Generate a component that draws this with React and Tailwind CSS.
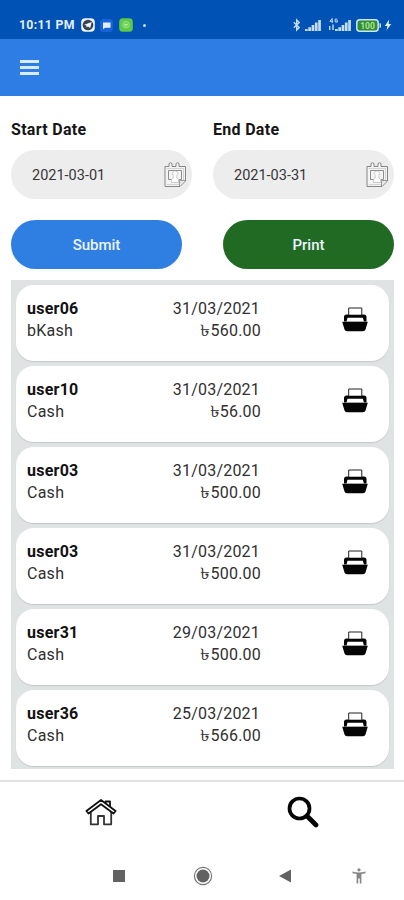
import React from "react";

const payments = [
  { user: "user06", method: "bKash", date: "31/03/2021", amount: "560.00" },
  { user: "user10", method: "Cash", date: "31/03/2021", amount: "56.00" },
  { user: "user03", method: "Cash", date: "31/03/2021", amount: "500.00" },
  { user: "user03", method: "Cash", date: "31/03/2021", amount: "500.00" },
  { user: "user31", method: "Cash", date: "29/03/2021", amount: "500.00" },
  { user: "user36", method: "Cash", date: "25/03/2021", amount: "566.00" },
];

function SignalBars() {
  return (
    <svg width="16" height="12" viewBox="0 0 16 12" fill="#c5dcf5">
      <path d="M0 12V10H2.7V12ZM3.3 12V8.2H6V12ZM6.6 12V6H9.3V12ZM9.9 12V3.4H12.6V12ZM13.2 12V1H15.9V12Z" />
    </svg>
  );
}

function StatusBar() {
  return (
    <div className="flex h-[39px] items-center bg-[#0052b4] pt-[11px] pl-[19px] pr-[12px]">
      <span className="w-[62px] whitespace-nowrap text-[12.3px] leading-4 font-bold tracking-[0.3px] text-[#e4effb]">10:11 PM</span>
      <svg width="14" height="14" viewBox="0 0 14 14">
        <rect x="0.2" y="0.2" width="13.6" height="13.6" rx="4" fill="#edf2f7" />
        <circle cx="7" cy="7" r="5.3" fill="#39424d" />
        <path d="M3.2 6.7 10.7 4 9.2 10 6.9 8.4 5.6 9.5 5.4 7.5Z" fill="#f4f7fa" />
      </svg>
      <svg className="ml-[5px]" width="13" height="13" viewBox="0 0 13 13">
        <rect width="13" height="13" rx="3.5" fill="#1863dc" />
        <path d="M3 3.5H10.5V8.8H5.2L3 10.2Z" fill="#e4efff" />
      </svg>
      <svg className="ml-[6px]" width="14" height="14" viewBox="0 0 14 14">
        <rect x="0.2" y="0.2" width="13.6" height="13.6" rx="3.5" fill="#5dc84a" />
        <circle cx="7" cy="6.7" r="3.4" fill="#72d65d" stroke="#93e27f" strokeWidth="0.8" />
        <path d="M5 6.5H9M6 8H8" stroke="#b9f0aa" strokeWidth="0.8" />
      </svg>
      <span className="ml-[10px] size-[3px] rounded-full bg-[#bfd9f6]" />
      <svg className="ml-auto" width="10" height="14" viewBox="0 0 10 14" fill="none" stroke="#c5dcf5" strokeWidth="1.4">
        <path d="M1.8 4.2 7.2 9.4 4.7 12V2L7.2 4.6 1.8 9.8" />
      </svg>
      <span className="ml-[3px]"><SignalBars /></span>
      <span className="relative ml-[14px]">
        <SignalBars />
        <svg className="absolute top-[-1px] left-[-7px]" width="12" height="13" viewBox="0 0 12 13" fill="none" stroke="#c5dcf5">
          <path d="M4.2 0.5 1.9 3.3H5M4.2 0.5V5M9.4 1.2H7.2V4H9.4V2.7H8.4" />
          <path d="M1.7 12V8M5 12V6.5" strokeWidth="1.4" />
        </svg>
      </span>
      <svg className="ml-[5px]" width="26" height="13" viewBox="0 0 26 13">
        <rect x="0.8" y="0.8" width="21.4" height="11.4" rx="3" fill="#348c3b" stroke="#c8e6ee" strokeWidth="1.5" />
        <path d="M23.5 4.3H24.2Q25 4.3 25 5.2V7.8Q25 8.7 24.2 8.7H23.5Z" fill="#c8e6ee" />
        <text x="11.5" y="9.5" textAnchor="middle" fontSize="8.5" fontWeight="700" fill="#a8e78e">100</text>
      </svg>
      <svg className="ml-[2px]" width="8" height="12" viewBox="0 0 8 12" fill="#e0effb"><path d="M5.2 0.5 0.8 7H3.4L2.4 11.6 7.2 5H4.6Z" /></svg>
    </div>
  );
}

function CalendarIcon() {
  return (
    <svg width="23" height="26" viewBox="0 0 23 26" fill="none" stroke="#858585" strokeWidth="1">
      <path d="M1 4.5H5V1.5Q6.5 0 8 1.5V4.5H12V1.5Q13.5 0 15 1.5V4.5H21.5V19L16 24.5H1Z" fill="#f4f4f4" />
      <path d="M2.8 6.5H19.5V18L15 22.5H2.8" stroke="#c4c4c4" strokeWidth="0.7" />
      <path d="M15.5 24V18.5H21" stroke="#999" />
      <path d="M4.5 8.5H17.5V17.5H15M4.5 8.5V17.5H7.5" stroke="#8f8f8f" />
      <path d="M7.5 20.5V17.5L9.2 16V13.5L8.3 11.5 9.5 9H12.5L13.7 11.5 12.8 13.5V16L14.5 17.5V20.5Z" fill="#fff" stroke="#aaa" strokeWidth="0.6" />
    </svg>
  );
}

function DateField({ label, value }) {
  return (
    <div className="w-[181px]">
      <div className="text-[16px] leading-5 font-bold tracking-[0.3px] text-[#161616]">{label}</div>
      <div className="mt-[10px] flex h-[49px] items-center justify-between rounded-full bg-[#ededed] pr-[5px] pl-[21px]">
        <span className="pt-[2px] text-[14.5px] text-[#373737]">{value}</span>
        <CalendarIcon />
      </div>
    </div>
  );
}

function PrinterIcon() {
  return (
    <svg width="26" height="26" viewBox="0 0 26 26">
      <path d="M4.5 7.5H22Q24.5 7.5 24.5 10V14.5H2V10Q2 7.5 4.5 7.5Z" fill="#050505" />
      <path d="M6.7 8.2V1H19.8V8.2Z" fill="#fff" stroke="#222" strokeWidth="1" />
      <path d="M6.2 8H20.3V10.8H6.2Z" fill="#050505" />
      <path d="M5.5 10.8H20.8L22 14.8H4.5Z" fill="#fff" />
      <path d="M0.2 14.8H25.8L23.5 22.5Q23 24.3 21 24.3H5Q3 24.3 2.5 22.5Z" fill="#050505" />
    </svg>
  );
}

function PaymentCard({ item }) {
  return (
    <div className="flex h-[76px] rounded-[18px] bg-white pt-[13px] pl-[11px] shadow-[0_1px_1px_#c5c8c8]">
      <div className="w-[100px] text-[16px] leading-[22px] tracking-[0.25px] text-[#303030]">
        <div className="font-bold text-[#111]">{item.user}</div>
        <div>{item.method}</div>
      </div>
      <div className="w-[134px] text-right text-[16px] leading-[22px] tracking-[0.2px] text-[#303030]">
        <div className="pr-px">{item.date}</div>
        <div><span className="inline-block origin-right scale-x-125 font-medium">৳</span>{item.amount}</div>
      </div>
      <div className="mt-[9px] ml-[81px]"><PrinterIcon /></div>
    </div>
  );
}

export default function App() {
  return (
    <div className="flex h-[900px] w-[404px] flex-col overflow-hidden bg-white font-[Roboto,'Noto_Sans',sans-serif]">
      <StatusBar />
      <header className="h-[57px] bg-[#2e7de5] pt-[21px] pl-[20px]">
        <div className="flex w-[19px] flex-col gap-[3px]">
          <span className="h-[3px] bg-[#d9eafa]" />
          <span className="h-[3px] bg-[#d9eafa]" />
          <span className="h-[3px] bg-[#d9eafa]" />
        </div>
      </header>
      <main className="flex h-[684px] flex-col pt-6 pr-[10px] pl-[11px]">
        <div className="flex gap-[21px]">
          <DateField label="Start Date" value="2021-03-01" />
          <DateField label="End Date" value="2021-03-31" />
        </div>
        <div className="mt-[21px] flex justify-between text-[15px] font-medium text-[#edf4ff]">
          <button className="h-[49px] w-[171px] rounded-full bg-[#2f7fe3] pt-[2px]">Submit</button>
          <button className="h-[49px] w-[171px] rounded-full bg-[#206a24] pt-[2px]">Print</button>
        </div>
        <section className="mt-[11px] flex h-[489px] flex-col gap-[5px] bg-[#e0e3e3] px-[5px] pt-[5px]">
          {payments.map((item, index) => <PaymentCard key={index} item={item} />)}
        </section>
      </main>
      <nav className="flex h-[71px] border-t-2 border-[#e2e2e2]">
        <div className="flex w-1/2 justify-center pt-[16px]">
          <svg width="32" height="29" viewBox="0 0 32 29" fill="none" stroke="#111" strokeWidth="1.8" strokeLinejoin="round">
            <path d="M5.8 14V26.3H13V18H19V26.3H26.2V14" stroke="#333" strokeWidth="1.8" />
            <path d="M20.5 5.8V3.5H25V9" />
            <path d="M1.4 13 16 2 30.6 13 28.5 15.5 16 6.2 3.5 15.5Z" fill="#fff" />
          </svg>
        </div>
        <div className="flex w-1/2 justify-center pt-[14px]">
          <svg width="32" height="33" viewBox="0 0 32 33" fill="none" stroke="#050505" strokeLinecap="round">
            <circle cx="12.5" cy="12.5" r="10" strokeWidth="3.7" />
            <path d="M20 20 29 29" strokeWidth="4.7" />
          </svg>
        </div>
      </nav>
      <footer className="flex h-[49px] items-center pl-[113px]">
        <span className="size-3 bg-[#626262]" />
        <svg className="ml-[68px]" width="20" height="20" viewBox="0 0 20 20"><circle cx="10" cy="10" r="8.6" fill="#fff" stroke="#777" strokeWidth="1.2" /><circle cx="10" cy="10" r="6.5" fill="#626262" /></svg>
        <svg className="ml-[66px]" width="12" height="14" viewBox="0 0 12 14" fill="#626262"><path d="M0 7 12 0.5V13.5Z" /></svg>
        <svg className="ml-[61px]" width="14" height="16" viewBox="0 0 14 16" fill="#858585">
          <circle cx="7" cy="1.8" r="1.6" />
          <path d="M0.5 3.6Q7 5.3 13.5 3.6V5.2L9.4 6V15.5H7.8V10.5H6.2V15.5H4.6V6L0.5 5.2Z" />
        </svg>
      </footer>
    </div>
  );
}
